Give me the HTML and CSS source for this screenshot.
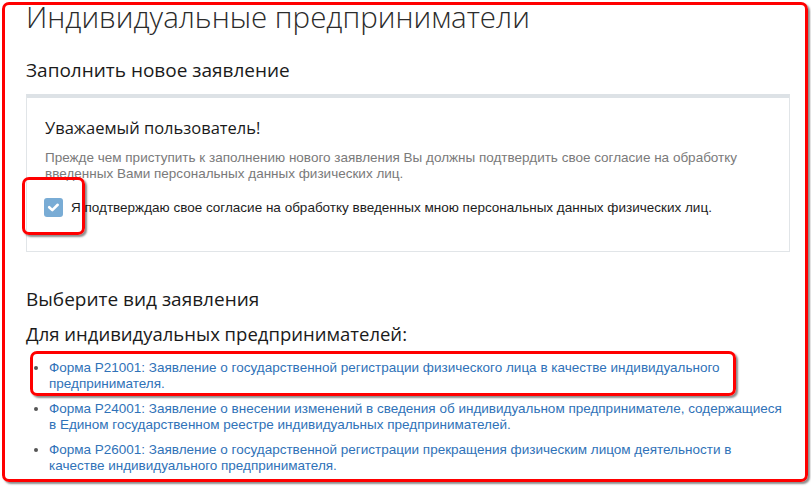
FILE: index.html
```html
<!DOCTYPE html>
<html lang="ru">
<head>
<meta charset="utf-8">
<title>Индивидуальные предприниматели</title>
<link rel="stylesheet" href="styles.css">
</head>
<body>
<main class="page">
  <h1 class="title">Индивидуальные предприниматели</h1>
  <h2 class="section-title">Заполнить новое заявление</h2>
  <section class="notice">
    <h3 class="notice-title">Уважаемый пользователь!</h3>
    <p class="notice-text">Прежде чем приступить к заполнению нового заявления Вы должны подтвердить свое согласие на обработку введенных Вами персональных данных физических лиц.</p>
    <label class="consent">
      <span class="checkbox">
        <svg width="19" height="19" viewBox="0 0 19 19"><path d="M5.2 9.2 L8.3 12.1 L13.7 6.8" fill="none" stroke="#fff" stroke-width="2.6" stroke-linecap="round" stroke-linejoin="round"/></svg>
      </span>
      <span class="consent-text">Я подтверждаю свое согласие на обработку введенных мною персональных данных физических лиц.</span>
    </label>
  </section>
  <h2 class="section-title choose">Выберите вид заявления</h2>
  <h3 class="group-title">Для индивидуальных предпринимателей:</h3>
  <ul class="forms">
    <li><a href="#">Форма Р21001: Заявление о государственной регистрации физического лица в качестве индивидуального предпринимателя.</a></li>
    <li><a href="#">Форма Р24001: Заявление о внесении изменений в сведения об индивидуальном предпринимателе, содержащиеся в Едином государственном реестре индивидуальных предпринимателей.</a></li>
    <li><a href="#">Форма Р26001: Заявление о государственной регистрации прекращения физическим лицом деятельности в качестве индивидуального предпринимателя.</a></li>
  </ul>
</main>
<div class="mark mark-page"></div>
<div class="mark mark-check"></div>
<div class="mark mark-item"></div>
</body>
</html>
```

FILE: styles.css
```css
html, body {
  margin: 0;
  padding: 0;
  background: #fff;
}
body {
  width: 811px;
  height: 487px;
  overflow: hidden;
  position: relative;
  font-family: "Liberation Sans", Arial, sans-serif;
}
.page {
  padding: 0 21px 0 26px;
}
.title {
  margin: 0;
  font-family: "Open Sans", sans-serif;
  font-weight: 300;
  font-size: 29.5px;
  line-height: 34px;
  color: #2b2b2b;
}
.section-title {
  margin: 24px 0 0;
  font-family: "Open Sans", sans-serif;
  font-weight: 400;
  font-size: 19px;
  line-height: 24px;
  color: #1a1a1a;
}
.notice {
  margin-top: 12px;
  border: 1px solid #e1e5e8;
  border-top: 4px solid #dde2e6;
  padding: 19px 18px 34px;
}
.notice-title {
  margin: 0;
  font-family: "Open Sans", sans-serif;
  font-weight: 400;
  font-size: 16.5px;
  line-height: 22px;
  color: #1a1a1a;
}
.notice-text {
  margin: 11px 0 0;
  font-size: 13.5px;
  line-height: 16px;
  color: #7a7a7a;
}
.consent {
  margin-top: 16px;
  display: flex;
  align-items: center;
  gap: 8px;
  font-size: 13.5px;
  line-height: 16px;
  color: #1c1c1c;
}
.checkbox {
  margin-left: -1px;
  width: 19px;
  height: 19px;
  border-radius: 3px;
  background: #79acd5;
  display: block;
}
.checkbox svg {
  display: block;
}
.choose {
  margin-top: 35px;
}
.group-title {
  margin: 10px 0 0;
  font-family: "Open Sans", sans-serif;
  font-weight: 400;
  font-size: 18.5px;
  line-height: 26px;
  color: #1a1a1a;
}
.forms {
  margin: 13px 0 0;
  padding: 0 0 0 23px;
  font-size: 13.5px;
  line-height: 16px;
}
.forms li {
  margin-bottom: 9px;
}
.forms li::marker {
  color: #555;
}
.forms a {
  color: #2f72b8;
  text-decoration: none;
}
.mark {
  position: absolute;
  border: 3px solid #f00;
  border-radius: 7px;
  box-shadow: 2px 2px 2px rgba(0, 0, 0, 0.45);
  box-sizing: border-box;
  pointer-events: none;
}
.mark-page {
  left: 2px;
  top: 2px;
  width: 806px;
  height: 480px;
}
.mark-check {
  left: 22px;
  top: 177px;
  width: 63px;
  height: 58px;
}
.mark-item {
  left: 30px;
  top: 351px;
  width: 706px;
  height: 45px;
}
```
